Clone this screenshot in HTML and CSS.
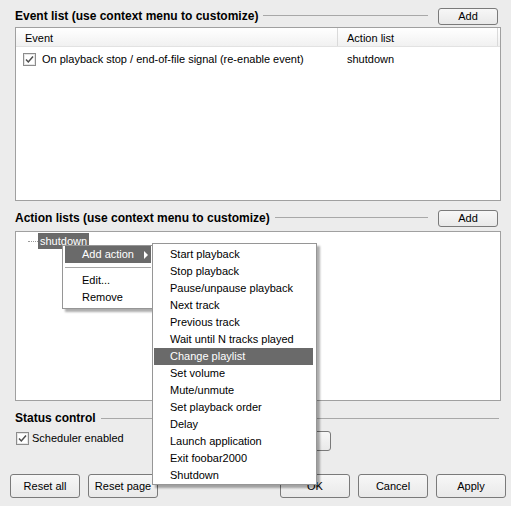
FILE: index.html
```html
<!DOCTYPE html>
<html>
<head>
<meta charset="utf-8">
<link rel="stylesheet" href="styles.css">
</head>
<body>
<div class="page">
  <div class="group-head first">
    <span class="group-title">Event list (use context menu to customize)</span>
    <span class="rule"></span>
    <button class="btn add">Add</button>
  </div>
  <div class="listbox events">
    <div class="lv-head">
      <div class="col c1">Event</div>
      <div class="col c2">Action list</div>
      <div class="col c3"></div>
    </div>
    <div class="lv-row">
      <div class="cell c1"><span class="chk"><svg width="13" height="13" viewBox="0 0 13 13"><rect x="0.5" y="0.5" width="12" height="12" fill="#fff" stroke="#8c8c8c"/><rect x="1.5" y="1.5" width="10" height="10" fill="none" stroke="#e6e6e6"/><path d="M3 6.5 L5.3 9 L10 3.6" fill="none" stroke="#4d4d4d" stroke-width="1.5"/></svg></span>On playback stop / end-of-file signal (re-enable event)</div>
      <div class="cell c2">shutdown</div>
    </div>
  </div>
  <div class="group-head second">
    <span class="group-title">Action lists (use context menu to customize)</span>
    <span class="rule"></span>
    <button class="btn add">Add</button>
  </div>
  <div class="listbox actions">
    <div class="tree-item"><span class="dots"></span><span class="sel">shutdown</span></div>
  </div>
  <div class="status-head">
    <span class="group-title">Status control</span>
    <span class="rule"></span>
  </div>
  <div class="status-row">
    <label class="check"><span class="chk"><svg width="13" height="13" viewBox="0 0 13 13"><rect x="0.5" y="0.5" width="12" height="12" fill="#fff" stroke="#8c8c8c"/><rect x="1.5" y="1.5" width="10" height="10" fill="none" stroke="#e6e6e6"/><path d="M3 6.5 L5.3 9 L10 3.6" fill="none" stroke="#4d4d4d" stroke-width="1.5"/></svg></span>Scheduler enabled</label>
    <button class="btn small">Run now</button>
  </div>
  <div class="footer">
    <div class="btn-group">
      <button class="btn big">Reset all</button>
      <button class="btn big">Reset page</button>
    </div>
    <div class="btn-group">
      <button class="btn big">OK</button>
      <button class="btn big">Cancel</button>
      <button class="btn big">Apply</button>
    </div>
  </div>
</div>

<div class="menu menu1">
  <div class="mi hot">Add action<span class="arrow"></span></div>
  <div class="msep"></div>
  <div class="mi">Edit...</div>
  <div class="mi">Remove</div>
</div>
<div class="menu menu2">
  <div class="mi">Start playback</div>
  <div class="mi">Stop playback</div>
  <div class="mi">Pause/unpause playback</div>
  <div class="mi">Next track</div>
  <div class="mi">Previous track</div>
  <div class="mi">Wait until N tracks played</div>
  <div class="mi hot">Change playlist</div>
  <div class="mi">Set volume</div>
  <div class="mi">Mute/unmute</div>
  <div class="mi">Set playback order</div>
  <div class="mi">Delay</div>
  <div class="mi">Launch application</div>
  <div class="mi">Exit foobar2000</div>
  <div class="mi">Shutdown</div>
</div>
</body>
</html>
```
FILE: styles.css
```css
html, body {
  margin: 0;
  padding: 0;
}
body {
  width: 511px;
  height: 506px;
  overflow: hidden;
  background: #ececec;
  font-family: "Liberation Sans", Arial, sans-serif;
  font-size: 11px;
  color: #000;
  position: relative;
}
.page {
  padding: 0 10px 0 15px;
  display: flex;
  flex-direction: column;
}
.group-head {
  display: flex;
  align-items: center;
  height: 17px;
  padding-right: 3px;
}
.group-head.first { margin-top: 8px; }
.group-head.second { margin-top: 9px; }
.group-title {
  font-weight: bold;
  font-size: 12px;
  line-height: 14px;
  white-space: nowrap;
  position: relative;
  top: -1px;
}
.rule {
  flex: 1;
  height: 0;
  border-top: 1px solid #a8a8a8;
  margin-left: 5px;
}
.group-head .rule { margin-right: 10px; position: relative; top: -1px; }
.btn {
  font-family: "Liberation Sans", Arial, sans-serif;
  font-size: 11px;
  color: #000;
  border: 1px solid #7a7a7a;
  border-radius: 3px;
  background: linear-gradient(#f7f7f7, #e9e9e9);
  padding: 0;
  margin: 0;
  box-sizing: border-box;
}
.btn.add {
  width: 60px;
  height: 17px;
  line-height: 15px;
}
.listbox {
  background: #fff;
  border: 1px solid #a0a0a0;
  box-sizing: border-box;
}
.listbox.events {
  margin-top: 2px;
  height: 174px;
}
.listbox.actions {
  margin-top: 4px;
  height: 170px;
}
.lv-head {
  display: flex;
  height: 18px;
  background: linear-gradient(#ffffff, #f1f1f1);
  border-bottom: 1px solid #e2e2e2;
}
.col {
  line-height: 21px;
  height: 18px;
  padding-left: 9px;
  box-sizing: border-box;
  border-right: 1px solid #dadada;
}
.c1 { width: 322px; }
.c2 { width: 160px; }
.col.c3 { flex: 1; border-right: none; padding: 0; }
.lv-row {
  display: flex;
  margin-top: 4px;
  height: 17px;
  line-height: 17px;
}
.cell { box-sizing: border-box; }
.cell.c1 {
  padding-left: 7px;
  display: flex;
  align-items: center;
}
.cell.c2 { padding-left: 9px; }
.chk {
  display: inline-flex;
  width: 13px;
  height: 13px;
  margin-right: 6px;
}
.chk svg { display: block; }
.tree-item {
  display: flex;
  align-items: center;
  margin-top: 1px;
  height: 16px;
}
.dots {
  width: 10px;
  height: 0;
  border-top: 1px dotted #9a9a9a;
  margin-left: 12px;
}
.sel {
  background: #6a6a6a;
  color: #fff;
  padding: 0 2px;
  line-height: 16px;
  height: 16px;
}
.status-head {
  display: flex;
  align-items: center;
  margin-top: 10px;
  height: 14px;
  padding-right: 2px;
}
.status-head .group-title { top: 0; }
.status-row {
  display: flex;
  align-items: flex-start;
  margin-top: 6px;
  height: 20px;
}
.check {
  display: flex;
  align-items: center;
  height: 15px;
  line-height: 15px;
}
.check .chk { margin-right: 3px; margin-left: 1px; }
.btn.small {
  width: 80px;
  height: 20px;
  margin-left: auto;
  margin-right: 170px;
}
.footer {
  display: flex;
  justify-content: space-between;
  margin: 23px -5px 0 -5px;
}
.btn-group {
  display: flex;
  gap: 8px;
}
.btn.big {
  width: 70px;
  height: 24px;
}
.menu {
  position: absolute;
  background: #fff;
  border: 1px solid #969696;
  box-shadow: 3px 3px 2px rgba(0, 0, 0, 0.32);
  box-sizing: border-box;
}
.menu1 {
  left: 62px;
  top: 245px;
  width: 91px;
  height: 64px;
  padding: 0 1px 0 2px;
}
.menu2 {
  left: 152px;
  top: 243px;
  width: 165px;
  height: 242px;
  padding: 2px 3px 0 1px;
}
.mi {
  height: 17px;
  line-height: 17px;
  white-space: nowrap;
  position: relative;
}
.menu1 .mi { padding-left: 17px; }
.menu2 .mi { padding-left: 16px; }
.mi.hot {
  background: #6a6a6a;
  color: #fff;
}
.arrow {
  position: absolute;
  right: 3px;
  top: 5px;
  width: 0;
  height: 0;
  border-left: 4px solid #fff;
  border-top: 4px solid transparent;
  border-bottom: 4px solid transparent;
}
.msep {
  height: 0;
  border-top: 1px solid #a6a6a6;
  margin: 4px 0 4px 0;
}
```
